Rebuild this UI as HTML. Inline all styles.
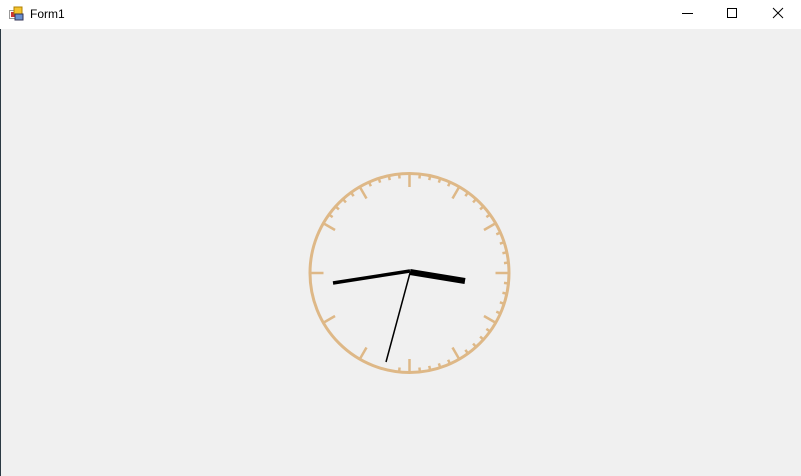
<!DOCTYPE html>
<html><head><style>
html,body{margin:0;padding:0;width:801px;height:476px;overflow:hidden;background:#f0f0f0;font-family:"Liberation Sans",sans-serif}
#tb{position:absolute;left:0;top:0;width:801px;height:29px;background:#fff}
#t{position:absolute;left:30px;top:7px;font-size:12px;color:#000}
#lb{position:absolute;left:0;top:29px;width:1px;height:447px;background:#2b3a44}
</style></head><body>
<div id="tb"></div>
<svg style="position:absolute;left:9px;top:6px" width="16" height="16" viewBox="0 0 16 16">
<rect x="0.5" y="4.5" width="8" height="8" fill="#fff" stroke="#999"/>
<rect x="2" y="6" width="5" height="5" fill="#c33"/>
<rect x="5" y="1" width="8" height="7" fill="#f4c430" stroke="#b08000"/>
<rect x="6" y="8" width="8" height="6" fill="#6a90d0" stroke="#335"/>
</svg>
<div id="t">Form1</div>
<svg style="position:absolute;left:660px;top:0" width="141" height="29">
<line x1="22" y1="13.5" x2="33" y2="13.5" stroke="#000"/>
<rect x="67.5" y="8.5" width="9" height="9" fill="none" stroke="#000"/>
<line x1="113" y1="8" x2="123" y2="18" stroke="#000"/>
<line x1="123" y1="8" x2="113" y2="18" stroke="#000"/>
</svg>
<div id="lb"></div>
<svg id="c" style="position:absolute;left:0;top:0" width="801" height="476">
<circle cx="409.5" cy="273" r="99.5" fill="none" stroke="#deb887" stroke-width="3"/>
<g id="ticks" stroke="#deb887" stroke-width="2.5"></g>
<line x1="410" y1="272" x2="465" y2="281" stroke="#000" stroke-width="6"/>
<line x1="410" y1="271" x2="333" y2="283" stroke="#000" stroke-width="3.5"/>
<line x1="410" y1="273" x2="386" y2="362" stroke="#000" stroke-width="1.5"/>
</svg>
<script>
var g=document.getElementById('ticks'),cx=409.5,cy=273,r=100,s='';
for(var m=0;m<60;m++){var hr=m%5==0;
if(!hr&&!(m>=50||m<=31))continue;
var L=hr?14:5,a=m*Math.PI/30;
var x1=cx+r*Math.sin(a),y1=cy-r*Math.cos(a),x2=cx+(r-L)*Math.sin(a),y2=cy-(r-L)*Math.cos(a);
s+='<line x1="'+x1+'" y1="'+y1+'" x2="'+x2+'" y2="'+y2+'"/>';}
g.innerHTML=s;
</script>
</body></html>
